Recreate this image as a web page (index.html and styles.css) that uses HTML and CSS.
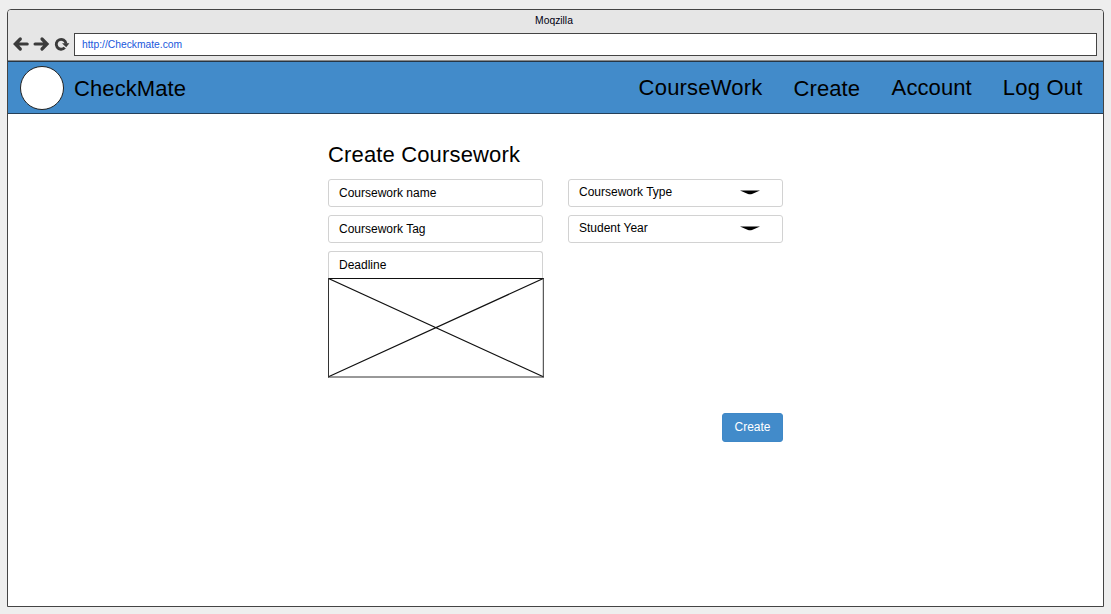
FILE: index.html
```
<!DOCTYPE html>
<html lang="en">
<head>
<meta charset="utf-8">
<title>Moqzilla</title>
<link rel="stylesheet" href="styles.css">
</head>
<body>
<div class="window">
  <div class="chrome">
    <div class="title">Moqzilla</div>
    <div class="toolbar">
      <svg class="controls" width="58" height="18" viewBox="0 0 58 18" fill="none" stroke="#3b3b3b" stroke-width="3.2">
        <path d="M8.3 3 L3.3 8 L8.3 13 M4 8 H15.2" stroke-linecap="round"/>
        <path d="M30 3 L35 8 L30 13 M34.5 8 H23.1" stroke-linecap="round"/>
        <path d="M52.8 11.6 A4.9 4.9 0 1 1 54 7.6" stroke-width="2.9"/>
        <path d="M50 7.3 H57.4 L54.2 11.3 Z" fill="#3b3b3b" stroke="none"/>
      </svg>
      <div class="url">http://Checkmate.com</div>
    </div>
  </div>
  <header class="header">
    <div class="logo"></div>
    <div class="brand">CheckMate</div>
    <nav class="nav">
      <a class="link link-coursework">CourseWork</a>
      <a class="link link-create">Create</a>
      <a class="link link-account">Account</a>
      <a class="link link-logout">Log Out</a>
    </nav>
  </header>
  <main class="main">
    <h1 class="heading">Create Coursework</h1>
    <div class="columns">
      <div class="column">
        <div class="field">Coursework name</div>
        <div class="field">Coursework Tag</div>
        <div class="deadline">
          <div class="field field-deadline">Deadline</div>
          <svg class="placeholder" width="216" height="100" viewBox="0 0 216 100" fill="none" stroke="#111">
            <path d="M0.5 0.5 L215.3 98.8 M215.3 0.5 L0.5 98.8" stroke-width="1.2"/>
            <path d="M0 0.5 H215.8"/>
            <path d="M0.5 0 V99.5 M215.3 0 V99.5 M0 99 H215.8" stroke="#333"/>
          </svg>
        </div>
      </div>
      <div class="column">
        <div class="field select">Coursework Type
          <svg class="caret" width="20" height="5" viewBox="0 0 20 5"><path d="M0 0.6 H20 L12 3.9 Q10 4.7 8 3.9 Z"/></svg>
        </div>
        <div class="field select">Student Year
          <svg class="caret" width="20" height="5" viewBox="0 0 20 5"><path d="M0 0.6 H20 L12 3.9 Q10 4.7 8 3.9 Z"/></svg>
        </div>
      </div>
    </div>
    <button class="submit">Create</button>
  </main>
</div>
</body>
</html>
```
FILE: styles.css
```
* { box-sizing: border-box; }
body {
  margin: 0;
  padding: 9px 7px 7px;
  height: 614px;
  background: #eee;
  color: #000;
  font-family: "Liberation Sans", Arial, sans-serif;
  overflow: hidden;
}
.window {
  height: 598px;
  border: 1px solid #444;
  border-radius: 4px 4px 0 0;
  background: #fff;
  overflow: hidden;
}
.chrome { height: 51px; background: #e6e6e6; border-bottom: 1px solid #888; }
.title {
  height: 23px;
  font-size: 10.3px;
  line-height: 22px;
  text-align: center;
  padding-right: 3px;
  color: #001;
}
.toolbar { display: flex; align-items: center; height: 23px; padding: 0 6px 0 4px; }
.controls { flex: none; margin-right: 4px; }
.url {
  flex: 1;
  height: 23px;
  padding-left: 7px;
  border: 1px solid #444;
  background: #fff;
  color: #2058dc;
  font-size: 10.3px;
  line-height: 22px;
}
.header {
  display: flex;
  align-items: center;
  height: 53px;
  padding: 0 20px 0 12px;
  background: #428bca;
  border-top: 1px solid #263544;
  border-bottom: 1px solid #263f58;
  font-size: 22px;
  line-height: 26px;
}
.logo {
  width: 44px;
  height: 44px;
  border: 1px solid #222;
  border-radius: 50%;
  background: #fff;
}
.brand { margin-left: 10px; padding-top: 2px; letter-spacing: 0.1px; }
.nav { display: flex; margin-left: auto; letter-spacing: 0.1px; }
.link { padding-top: 1px; }
.link-create { margin: 0 31.5px 0 31px; padding-top: 2px; }
.link-account { margin-right: 31px; }
.link-coursework { letter-spacing: 0.2px; }
.link-logout { letter-spacing: 0.2px; margin-right: 0.5px; }
.main {
  display: flex;
  flex-direction: column;
  width: 455px;
  margin-left: 320px;
  padding-top: 27px;
}
.heading {
  margin: 0 0 11px;
  font-size: 22px;
  font-weight: 400;
  line-height: 27px;
  letter-spacing: 0.15px;
}
.columns { display: flex; justify-content: space-between; }
.column { display: flex; flex-direction: column; gap: 8px; width: 215px; }
.field {
  height: 28px;
  padding-left: 10px;
  border: 1px solid #d2d2d2;
  border-radius: 3px;
  font-size: 12px;
  line-height: 27px;
}
.field-deadline { height: 27px; border-bottom: 0; border-radius: 3px 3px 0 0; }
.placeholder { display: block; }
.select {
  display: flex;
  justify-content: space-between;
  padding-right: 22px;
  line-height: 25px;
}
.caret { margin-top: 10px; }
.submit {
  align-self: flex-end;
  width: 61px;
  height: 29px;
  margin-top: 35px;
  padding: 0 0 2px;
  border: 1px solid #3f88c7;
  border-radius: 3px;
  background: #428bca;
  color: #fff;
  font: 12px "Liberation Sans", Arial, sans-serif;
}
```
